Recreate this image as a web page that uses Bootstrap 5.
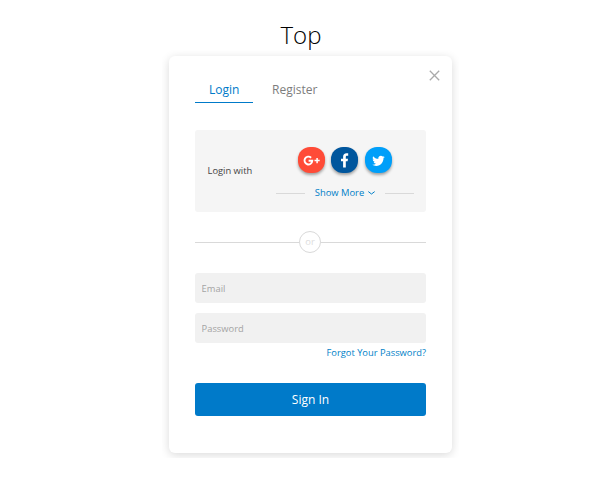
<!DOCTYPE html>
<html lang="en">
<head>
<meta charset="utf-8">
<meta name="viewport" content="width=device-width, initial-scale=1">
<title>Login</title>
<link href="https://cdn.jsdelivr.net/npm/bootstrap@5.3.0/dist/css/bootstrap.min.css" rel="stylesheet">
<style>
body{font-family:"Open Sans","Noto Sans",sans-serif;background:#fff;overflow:hidden}
.page-title{font-size:24px;font-weight:300;line-height:34px;color:#000;padding:18px 0 0 2px;height:50px}
.dialog-wrap{width:297px;height:408px;padding:6px 7px 5px;margin-left:162px}
.dialog{width:283px;height:397px;border:0;border-radius:6px;box-shadow:0 2px 10px rgba(0,0,0,.15);padding:21px 26px 0}
.close-x{top:14px;right:12.5px;width:11px;height:11px}
.tabs{gap:5px;height:26px}
.tabs .nav-link{font-size:12px;line-height:26px;height:26px;padding:0 14px;color:#7d7d7d;border-radius:0}
.tabs .nav-link.active{width:58px;color:#007ac9;background:none;border-bottom:1px solid #007ac9}
.social{height:82px;margin-top:27px;background:#f5f5f5;border-radius:3px}
.social-label{font-size:9.35px;color:#444;width:81px;padding-left:12.5px}
.social-icons{gap:6.3px;padding:17px 0 0 22px}
.round-btn{width:27px;height:26px;border-radius:12px;box-shadow:0 2px 3px rgba(0,0,0,.35)}
.round-btn svg{display:block;width:27px;height:27px}
.g-btn{background:#ff4b37}.f-btn{background:#00569d}.t-btn{background:#009ff9}
.rule{height:1px;background:#d9d9d9}
.more{margin-top:12px;height:16px;width:138px;font-size:9.4px}
.more .rule{width:29px}
.more a,.forgot{color:#007fc8}
.divider{height:22px;margin-top:19px}
.divider .rule:first-child{flex:0 0 104px}
.or{width:22px;height:22px;border:1px solid #d9d9d9;font-size:9.4px;color:#ddd;line-height:1;padding-bottom:1px}
.field{height:30px;border:0;background:#f1f1f1;border-radius:3px;font-size:9.35px;padding:0 6.6px}
.field::placeholder{color:#a4a4a4;opacity:1}
.login-form{margin-top:20px}
.login-form .field + .field{margin-top:10px}
.forgot{font-size:9.33px;line-height:14px;margin-top:3px}
.sign{height:33px;margin-top:23px;background:#007ac9;border:0;border-radius:3px;font-size:12px;padding:0;line-height:33px}
</style>
<script src="https://cdn.jsdelivr.net/npm/bootstrap@5.3.0/dist/js/bootstrap.bundle.min.js"></script>
</head>
<body>
<h1 class="page-title text-center m-0">Top</h1>
<main class="dialog-wrap overflow-hidden">
  <section class="card dialog position-relative">
    <svg class="close-x position-absolute" viewBox="0 0 11 11" fill="none" stroke="#aaa" stroke-width="1.3" aria-hidden="true"><path d="M.8.8l9.4 9.4M10.2.8L.8 10.2"/></svg>
    <nav class="nav tabs flex-nowrap">
      <a class="nav-link active text-nowrap" href="#">Login</a>
      <a class="nav-link text-nowrap" href="#">Register</a>
    </nav>
    <div class="social d-flex">
      <div class="social-label d-flex align-items-center">Login with</div>
      <div>
        <div class="social-icons d-flex">
          <a class="round-btn g-btn" href="#" aria-label="Google"><svg viewBox="0 0 27 27" fill="none" stroke="#fff"><path d="M13.1 10.7a3.9 3.9 0 1 0 1.2 3.1H10.6" stroke-width="1.9"/><path d="M16.5 13.6h5.2M19.1 11v5.2" stroke-width="1.5"/></svg></a>
          <a class="round-btn f-btn" href="#" aria-label="Facebook"><svg viewBox="0 0 27 27" fill="#fff"><path d="M12.1 20.5v-6.3H10v-2.5h2.1V9.8c0-2.3 1.3-3.6 3.4-3.6h1.7v2.5h-1.1c-1 0-1.3.5-1.3 1.3v1.7H17l-.4 2.5h-1.8v6.3z"/></svg></a>
          <a class="round-btn t-btn" href="#" aria-label="Twitter"><svg viewBox="0 0 24 24" fill="#fff"><g transform="translate(6.4 6.7) scale(.465)"><path d="M23.95 4.57a10 10 0 0 1-2.82.78 4.96 4.96 0 0 0 2.16-2.73c-.95.56-2 .96-3.13 1.18a4.92 4.92 0 0 0-8.38 4.49C7.69 8.09 4.07 6.13 1.64 3.16a4.92 4.92 0 0 0 1.52 6.57 4.9 4.9 0 0 1-2.23-.61v.06a4.92 4.92 0 0 0 3.95 4.83 5 5 0 0 1-2.21.08 4.94 4.94 0 0 0 4.6 3.42A9.87 9.87 0 0 1 0 19.54a14 14 0 0 0 7.55 2.21c9.05 0 14-7.5 14-13.98 0-.21 0-.42-.02-.63a10 10 0 0 0 2.46-2.55z"/></g></svg></a>
        </div>
        <div class="more d-flex align-items-center justify-content-between">
          <span class="rule"></span>
          <a href="#" class="text-decoration-none d-flex align-items-center gap-1">Show More
            <svg width="7" height="4" viewBox="0 0 7 4" fill="none" stroke="currentColor" aria-hidden="true"><path d="M.3.6L3.5 3 6.7.6"/></svg></a>
          <span class="rule"></span>
        </div>
      </div>
    </div>
    <div class="divider d-flex align-items-center">
      <span class="rule"></span>
      <span class="or rounded-circle d-flex align-items-center justify-content-center">or</span>
      <span class="rule flex-fill"></span>
    </div>
    <form class="login-form">
      <input class="form-control field" type="email" placeholder="Email" aria-label="Email">
      <input class="form-control field" type="password" placeholder="Password" aria-label="Password">
      <a href="#" class="forgot d-block text-end text-decoration-none">Forgot Your Password?</a>
      <button type="button" class="btn btn-primary sign w-100">Sign In</button>
    </form>
  </section>
</main>
</body>
</html>
